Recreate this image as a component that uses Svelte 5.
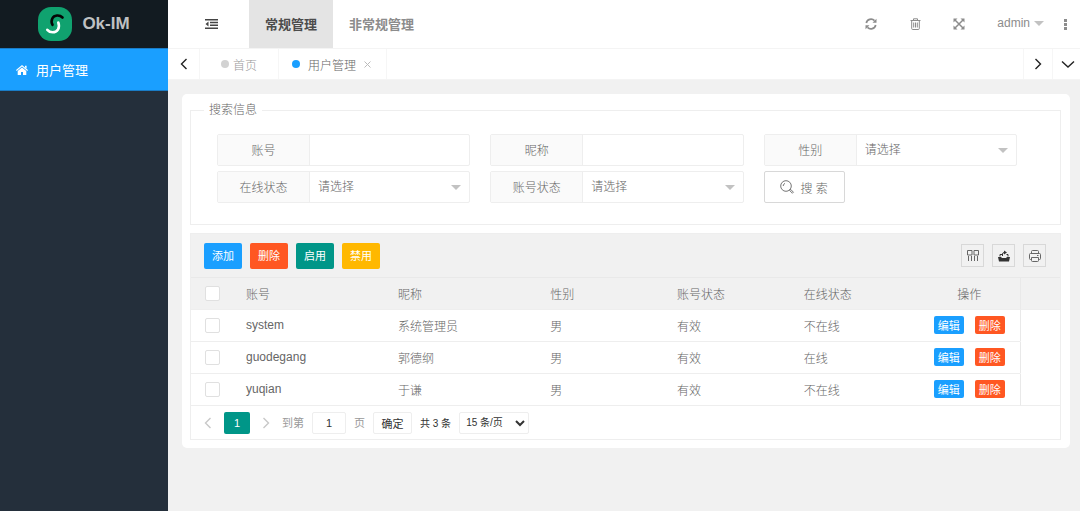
<script lang="ts">
  interface User {
    account: string;
    nickname: string;
    gender: string;
    status: string;
    online: string;
    checked: boolean;
  }

  let users = $state<User[]>([
    { account: 'system', nickname: '系统管理员', gender: '男', status: '有效', online: '不在线', checked: false },
    { account: 'guodegang', nickname: '郭德纲', gender: '男', status: '有效', online: '在线', checked: false },
    { account: 'yuqian', nickname: '于谦', gender: '男', status: '有效', online: '不在线', checked: false },
  ]);

  const fields = [
    { id: 'account', label: '账号', type: 'text' },
    { id: 'nickname', label: '昵称', type: 'text' },
    { id: 'gender', label: '性别', type: 'select', options: ['男', '女'] },
    { id: 'online', label: '在线状态', type: 'select', options: ['在线', '不在线'] },
    { id: 'status', label: '账号状态', type: 'select', options: ['有效', '禁用'] },
  ];

  const actions = [
    { text: '添加', kind: 'blue' },
    { text: '删除', kind: 'red' },
    { text: '启用', kind: 'green' },
    { text: '禁用', kind: 'yellow' },
  ];

  let allChecked = $derived(users.every((u) => u.checked));
  let page = $state('1');

  function toggleAll() {
    const next = !allChecked;
    users.forEach((u) => (u.checked = next));
  }
</script>

{#snippet chevron(d: string)}
  <svg class="chevron" width="14" height="14" viewBox="0 0 14 14" fill="none" stroke="currentColor" stroke-width="1.4"><path {d} /></svg>
{/snippet}

<div class="layout">
  <aside class="sidebar">
    <div class="logo">
      <svg width="34" height="34" viewBox="0 0 34 34" fill="none" stroke-linecap="round">
        <rect width="34" height="34" rx="13" fill="#10a26f" />
        <path d="M24.500 10.500C21.500 7.500 16 8 14.300 11.500C13.200 14 13.400 16 14.500 17.800" stroke="#050505" stroke-width="2.600" />
        <path d="M9.300 22.800C12 26 17.500 26.300 20 22.500C21.300 20.500 21.200 18 20.300 15.500" stroke="#fff" stroke-width="2.600" />
      </svg>
      <span>Ok-IM</span>
    </div>
    <nav>
      <a class="menu-item" href="#users">
        <svg width="12" height="10" viewBox="0 0 12 10" fill="currentColor">
          <path d="M6 0L12 5L11.300 5.900L6 1.600L.7 5.900L0 5ZM9 .8h1.600v2.800L9 2.300ZM6 2.400L10.300 6v4H7V7H5v3H1.700V6Z" />
        </svg>
        用户管理
      </a>
    </nav>
  </aside>

  <div class="main">
    <header class="header">
      <button class="toggle" aria-label="折叠菜单">
        <svg width="13" height="10" viewBox="0 0 13 10" fill="currentColor">
          <path d="M0 0h13v1.500H0ZM5 2.800h8v1.500H5ZM5 5.600h8v1.500H5ZM0 8.500h13V10H0ZM3.500 2.500v5L.5 5Z" />
        </svg>
      </button>
      <nav class="modules">
        <a class="module active" href="#normal">常规管理</a>
        <a class="module" href="#other">非常规管理</a>
      </nav>
      <div class="tools">
        <button class="tool" aria-label="刷新">
          <svg width="12" height="12" viewBox="0 0 12 12" fill="none" stroke="currentColor" stroke-width="1.700">
            <path d="M1.300 5A4.800 4.800 0 0 1 9.500 2.700M10.700 7A4.800 4.800 0 0 1 2.500 9.300" />
            <path d="M11.500.8v4h-4ZM.5 11.200v-4h4Z" fill="currentColor" stroke="none" />
          </svg>
        </button>
        <button class="tool" aria-label="清理">
          <svg width="11" height="12" viewBox="0 0 11 12" fill="none" stroke="currentColor">
            <path d="M.5 2.500h10M3.500 2.500V.800h4v1.700M1.700 2.500V10.500q0 1 1 1h5.600q1 0 1-1V2.500M3.700 4.500v5M5.500 4.500v5M7.300 4.500v5" />
          </svg>
        </button>
        <button class="tool" aria-label="全屏">
          <svg width="12" height="12" viewBox="0 0 12 12" fill="currentColor">
            <path d="M.5.5h4L.5 4.500ZM11.500.5v4l-4-4ZM.5 11.500v-4l4 4ZM11.500 11.500h-4l4-4Z" />
            <path d="M2 2l8 8M10 2l-8 8" stroke="currentColor" stroke-width="1.500" />
          </svg>
        </button>
        <button class="admin">
          admin
          <svg width="10" height="5" viewBox="0 0 10 5" fill="#c2c2c2"><path d="M0 0h10L5 5Z" /></svg>
        </button>
        <button class="more" aria-label="更多">
          <svg width="3" height="11" viewBox="0 0 3 11" fill="currentColor"><path d="M0 0h3v3H0ZM0 4h3v3H0ZM0 8h3v3H0Z" /></svg>
        </button>
      </div>
    </header>

    <div class="tabs">
      <button class="tab-nav prev" aria-label="上一个">{@render chevron('M9.500 2L4.500 7L9.500 12')}</button>
      <a class="tab home" href="#home"><i class="dot"></i>首页</a>
      <div class="tab current">
        <i class="dot"></i>
        <a href="#users">用户管理</a>
        <button class="close" aria-label="关闭">
          <svg width="7" height="7" viewBox="0 0 7 7" stroke="currentColor"><path d="M.5.5l6 6M6.500.5l-6 6" /></svg>
        </button>
      </div>
      <button class="tab-nav next" aria-label="下一个">{@render chevron('M4.500 2L9.500 7L4.500 12')}</button>
      <button class="tab-nav down" aria-label="标签操作">{@render chevron('M2 4.500L8 10L14 4.500')}</button>
    </div>

    <main class="card">
      <form onsubmit={(e) => e.preventDefault()}>
        <fieldset class="search">
          <legend>搜索信息</legend>
          <div class="fields">
            {#each fields as field}
              <div class="field">
                <label for={field.id}>{field.label}</label>
                {#if field.type === 'text'}
                  <input id={field.id} type="text" />
                {:else}
                  <div class="picker">
                    <select id={field.id}>
                      <option value="">请选择</option>
                      {#each field.options ?? [] as option}
                        <option>{option}</option>
                      {/each}
                    </select>
                    <svg width="10" height="5" viewBox="0 0 10 5" fill="#c2c2c2"><path d="M0 0h10L5 5Z" /></svg>
                  </div>
                {/if}
              </div>
            {/each}
            <button class="search-btn" type="submit">
              <svg width="14" height="14" viewBox="0 0 14 14" fill="none" stroke="currentColor" stroke-width="0.900">
                <circle cx="6" cy="6" r="5.300" />
                <path d="M3.200 6A2.800 2.800 0 0 1 5 3.400M9.800 9.800l1-.3 2.600 2.700-1 1-2.700-2.600Z" />
              </svg>
              搜 索
            </button>
          </div>
        </fieldset>
      </form>

      <section class="grid">
        <div class="toolbar">
          {#each actions as action}
            <button class="btn {action.kind}">{action.text}</button>
          {/each}
          <div class="grid-tools">
            <button aria-label="筛选列">
              <svg width="12" height="12" viewBox="0 0 12 12" fill="none" stroke="currentColor">
                <path d="M.5.500h4.500v4.500H.5ZM7 .5h4.500v4.500H7ZM1.500 6v5M4.500 6v5M7.500 6v5M10.500 6v5" />
              </svg>
            </button>
            <button class="export" aria-label="导出">
              <svg width="12" height="12" viewBox="0 0 12 12" fill="#333">
                <path d="M0 7h3l1 1h4l1-1h3l-1 4.500H1Z" />
                <path d="M2 6.500V4.500h2M8.500 4.500h1.500v2M4.500 6V4q0-1.500 2-1.500" fill="none" stroke="#333" />
                <path d="M6 .5L9 2.500L6 4.500Z" />
              </svg>
            </button>
            <button aria-label="打印">
              <svg width="12" height="12" viewBox="0 0 12 12" fill="none" stroke="currentColor">
                <path d="M2.500 3.500V1.500q0-1 1-1h5q1 0 1 1v2M2.500 9.500h-1q-1 0-1-1v-4q0-1 1-1h9q1 0 1 1v4q0 1-1 1h-1M2.500 7.500h7v3q0 1-1 1h-5q-1 0-1-1ZM8 5.500h1.500" />
              </svg>
            </button>
          </div>
        </div>

        <table>
          <colgroup>
            <col class="c-check" />
            <col class="c-name" />
            <col class="c-name" />
            <col class="c-state" />
            <col class="c-state" />
            <col class="c-online" />
            <col class="c-action" />
            <col />
          </colgroup>
          <thead>
            <tr>
              <th class="check"><input type="checkbox" aria-label="全选" checked={allChecked} onchange={toggleAll} /></th>
              <th>账号</th>
              <th>昵称</th>
              <th>性别</th>
              <th>账号状态</th>
              <th>在线状态</th>
              <th class="ops">操作</th>
              <td class="gutter"></td>
            </tr>
          </thead>
          <tbody>
            {#each users as user}
              <tr>
                <td class="check"><input type="checkbox" aria-label={user.account} bind:checked={user.checked} /></td>
                <td>{user.account}</td>
                <td>{user.nickname}</td>
                <td>{user.gender}</td>
                <td>{user.status}</td>
                <td>{user.online}</td>
                <td class="ops">
                  <div class="row-btns">
                    <button class="btn small blue">编辑</button>
                    <button class="btn small red">删除</button>
                  </div>
                </td>
                <td class="gutter"></td>
              </tr>
            {/each}
          </tbody>
        </table>

        <div class="pager">
          <button class="arrow" aria-label="上一页" disabled>{@render chevron('M9.500 2L4.500 7L9.500 12')}</button>
          <button class="page">1</button>
          <button class="arrow" aria-label="下一页" disabled>{@render chevron('M4.500 2L9.500 7L4.500 12')}</button>
          <label class="skip" for="page">到第</label>
          <input id="page" type="text" bind:value={page} />
          <span class="skip">页</span>
          <button class="confirm">确定</button>
          <span class="count">共 3 条</span>
          <select aria-label="每页条数">
            <option>15 条/页</option>
            <option>30 条/页</option>
            <option>50 条/页</option>
          </select>
        </div>
      </section>
    </main>
  </div>
</div>

<style>
  :global(body) {
    background: #f1f1f1;
  }

  .layout,
  button,
  input,
  select {
    font-family: 'Liberation Sans', 'Noto Sans CJK SC', sans-serif;
    font-size: 12px;
    color: #666;
  }

  .layout {
    display: flex;
    min-height: 100vh;
    font-weight: 300;
  }

  .layout * {
    box-sizing: border-box;
  }

  button,
  input,
  select {
    margin: 0;
    padding: 0;
    border: 0;
    font-weight: 300;
    background: none;
  }

  button {
    display: flex;
    align-items: center;
    justify-content: center;
    cursor: pointer;
  }

  a {
    color: inherit;
    text-decoration: none;
  }

  svg {
    display: block;
    flex: none;
    overflow: visible;
  }

  .sidebar {
    flex: none;
    width: 168px;
    background: #242f3b;
  }

  .logo {
    display: flex;
    align-items: center;
    justify-content: center;
    gap: 10px;
    height: 48px;
    background: #121b21;
    color: #bfc1c3;
    font-size: 17px;
    font-weight: 700;
  }

  .menu-item {
    display: flex;
    align-items: center;
    gap: 8px;
    height: 43px;
    padding: 0 16px;
    border-top: 1px solid #1a7cc6;
    border-bottom: 1px solid #1a7cc6;
    background: #1a9fff;
    color: #fff;
    font-size: 13px;
    font-weight: 400;
  }

  .main {
    flex: 1;
    min-width: 0;
  }

  .header {
    display: flex;
    height: 48px;
    padding-left: 21px;
    background: #fff;
  }

  .toggle {
    width: 44px;
    color: #444;
  }

  .modules {
    display: flex;
    margin-left: 16px;
  }

  .module {
    display: flex;
    align-items: center;
    padding: 0 16px 2px;
    color: #8c8c8c;
    font-size: 13px;
    font-weight: 700;
  }

  .module.active {
    background: #e4e4e4;
    color: #4c4c4c;
  }

  .tools {
    display: flex;
    margin-left: auto;
  }

  .tool {
    width: 44px;
    color: #8c8c8c;
  }

  .admin {
    gap: 4px;
    padding: 0 6px 2px 16px;
    color: #8c8c8c;
  }

  .more {
    width: 30px;
    color: #8c8c8c;
  }

  .tabs {
    display: flex;
    height: 32px;
    border-top: 1px solid #f4f4f4;
    border-bottom: 1px solid #f4f4f4;
    background: #fff;
  }

  .tab {
    display: flex;
    align-items: center;
    gap: 8px;
    padding: 0 15px 0 13px;
    border-right: 1px solid #f6f6f6;
  }

  .home {
    gap: 4px;
    padding: 0 21px;
    color: #999;
  }

  .dot {
    width: 8px;
    height: 8px;
    border-radius: 50%;
    background: #d2d2d2;
  }

  .current .dot {
    background: #1a9fff;
  }

  .close {
    color: #bbb;
  }

  .tab-nav {
    width: 29px;
    color: #222;
  }

  .prev {
    width: 32px;
    border-right: 1px solid #f6f6f6;
  }

  .next {
    margin-left: auto;
    border-left: 1px solid #f6f6f6;
  }

  .down {
    width: 28px;
    border-left: 1px solid #f6f6f6;
  }

  .card {
    margin: 14px 10px 14px 14px;
    padding: 8px 9px 8px 8px;
    border-radius: 5px;
    background: #fff;
  }

  .search {
    min-width: 0;
    margin: 0;
    padding: 16px 43px 21px 26px;
    border: 1px solid #eee;
  }

  legend {
    margin-left: -13px;
    padding: 0 5px;
    line-height: 16px;
  }

  .fields {
    display: grid;
    grid-template-columns: repeat(3, minmax(0, 1fr));
    gap: 5px 20px;
  }

  .field {
    display: flex;
    height: 32px;
    border: 1px solid #eee;
    border-radius: 2px;
  }

  .field label {
    display: flex;
    align-items: center;
    justify-content: center;
    width: 92px;
    flex: none;
    padding-bottom: 2px;
    border-right: 1px solid #eee;
    background: #fafafa;
  }

  .field input,
  .picker {
    flex: 1;
    min-width: 0;
  }

  .field input {
    padding: 0 8px;
  }

  .picker {
    display: flex;
    align-items: center;
    padding-right: 8px;
  }

  .picker select {
    flex: 1;
    min-width: 0;
    height: 100%;
    padding: 0 8px;
    appearance: none;
  }

  .search-btn {
    gap: 6px;
    width: 81px;
    height: 32px;
    border: 1px solid #d8d8d8;
    border-radius: 2px;
  }

  .grid {
    margin-top: 8px;
    border: 1px solid #eee;
  }

  .toolbar {
    display: flex;
    align-items: center;
    gap: 8px;
    height: 43px;
    padding: 0 14px 0 13px;
    background: #f1f1f1;
  }

  .btn {
    height: 26px;
    padding: 0 8px 2px;
    border-radius: 2px;
    color: #fff;
    font-size: 11px;
    font-weight: 400;
  }

  .small {
    height: 18px;
    padding: 0 4px 1px;
  }

  .blue {
    background: #1a9fff;
  }

  .red {
    background: #ff5722;
  }

  .green {
    background: #009688;
  }

  .yellow {
    background: #ffb800;
  }

  .grid-tools {
    display: flex;
    gap: 8px;
    margin-left: auto;
  }

  .grid-tools button {
    width: 23px;
    height: 23px;
    border: 1px solid #d8d8d8;
    color: #666;
  }

  table {
    width: 100%;
    table-layout: fixed;
    border-collapse: separate;
    border-spacing: 0;
  }

  .c-check {
    width: 47px;
  }

  .c-name {
    width: 17.5%;
  }

  .c-state {
    width: 14.6%;
  }

  .c-online {
    width: 14.1%;
  }

  .c-action {
    width: 102px;
  }

  th,
  td {
    height: 32px;
    padding: 0 8px 1px;
    border-bottom: 1px solid #eee;
    font-weight: 300;
    text-align: left;
  }

  thead tr {
    background: #f1f1f1;
  }

  thead th,
  thead td {
    height: 33px;
    border-top: 1px solid #e9e9e9;
  }

  .check {
    padding: 0 14px;
  }

  .ops {
    text-align: center;
  }

  .gutter {
    border-left: 1px solid #e9e9e9;
  }

  tbody .gutter {
    border-bottom-color: transparent;
  }

  tbody tr:last-child td {
    border-bottom-color: #eee;
  }

  .row-btns {
    display: flex;
    justify-content: center;
    gap: 11px;
  }

  input[type='checkbox'] {
    display: block;
    width: 15px;
    height: 15px;
    border: 1px solid #e0e0e0;
    border-radius: 2px;
    background: #fff;
    appearance: none;
  }

  input[type='checkbox']:checked {
    border-color: #009688;
    background: #009688;
  }

  .pager {
    display: flex;
    align-items: center;
    gap: 8px;
    height: 33px;
    padding: 0 9px;
    color: #333;
    font-size: 11px;
    font-weight: 400;
  }

  .pager button,
  .pager input,
  .pager select {
    height: 22px;
    color: #333;
    font-size: 11px;
    font-weight: 400;
  }

  .pager .arrow {
    width: 16px;
    color: #c8c8c8;
  }

  .pager .page {
    width: 26px;
    border-radius: 2px;
    background: #009688;
    color: #fff;
  }

  .pager .skip {
    padding-bottom: 2px;
    color: #999;
  }

  .pager input {
    width: 34px;
    border: 1px solid #eee;
    border-radius: 2px;
    text-align: center;
  }

  .pager .confirm {
    width: 39px;
    border: 1px solid #eee;
    border-radius: 2px;
  }

  .pager .count,
  .pager select {
    font-size: 10px;
  }

  .pager select {
    width: 70px;
    padding: 0 2px;
    border: 1px solid #eee;
    border-radius: 2px;
  }
</style>
